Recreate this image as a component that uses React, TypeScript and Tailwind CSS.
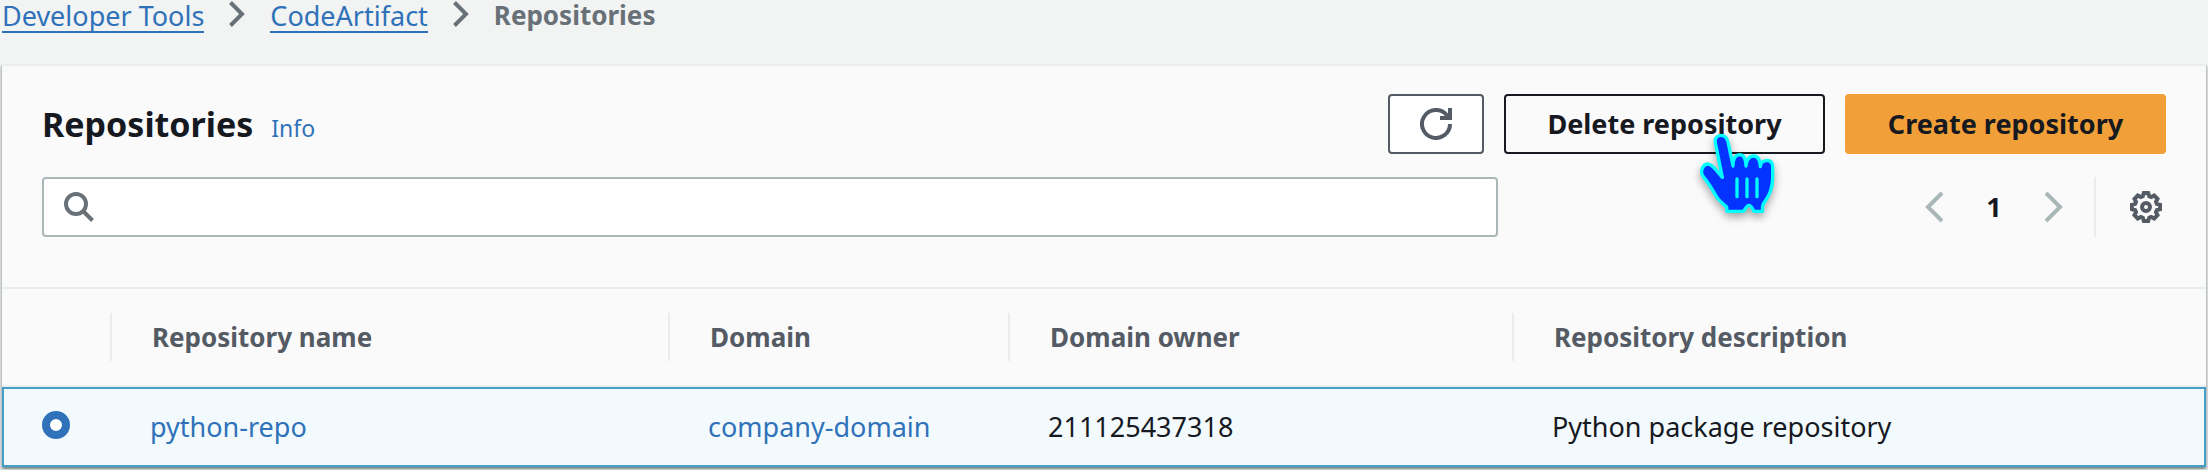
import { PropsWithChildren } from "react";
import clsx from "clsx";

const columns = ["Repository name", "Domain", "Domain owner", "Repository description"];

const repositories = [
    {
        name: "python-repo",
        domain: "company-domain",
        owner: "211125437318",
        description: "Python package repository",
    },
];

export default function App() {
    return (
        <div className="min-h-screen bg-[#f2f3f3] font-['Noto_Sans',sans-serif] text-[27px] leading-[40px] text-[#16191f]">
            <Breadcrumbs />
            <main className="mx-0.5 border-t-2 border-[#eaeded] bg-[#fafafa] shadow-[0_2px_2px_0_rgba(0,28,36,0.3),2px_2px_2px_0_rgba(0,28,36,0.15),-2px_2px_2px_0_rgba(0,28,36,0.15)]">
                <div className="px-10 pt-7 pb-[50px]">
                    <Header />
                    <Toolbar />
                </div>
                <RepositoriesTable />
            </main>
        </div>
    );
}

function Breadcrumbs() {
    return (
        <nav aria-label="Breadcrumbs" className="flex h-16 items-start gap-[25px] px-0.5 leading-[31px]">
            <BreadcrumbLink>Developer Tools</BreadcrumbLink>
            <BreadcrumbChevron />
            <BreadcrumbLink>CodeArtifact</BreadcrumbLink>
            <BreadcrumbChevron />
            <span className="text-[26px] font-bold text-[#687078]">Repositories</span>
        </nav>
    );
}

const BreadcrumbLink = ({ children }: PropsWithChildren) => (
    <a href="#" className="border-b-2 border-[#2f72b9] text-[#2f72b9]">
        {children}
    </a>
);

const BreadcrumbChevron = () => (
    <svg className="h-7 w-4" viewBox="0 0 16 28" fill="none" stroke="#687078" strokeWidth="4">
        <path d="M1.5 2.5 13 14 1.5 25.5" />
    </svg>
);

function Header() {
    return (
        <div className="flex items-center justify-between">
            <div className="flex items-baseline gap-[18px] pt-1">
                <h1 className="text-[34px] font-bold">Repositories</h1>
                <a href="#" className="text-[23px] text-[#2f72b9]">
                    Info
                </a>
            </div>
            <div className="flex gap-5">
                <Button className="w-24 border-[#545b64] bg-white" label="Refresh">
                    <RefreshIcon />
                </Button>
                <div className="relative">
                    <Button className="w-[321px] border-[#16191f] bg-[#fafafa]">Delete repository</Button>
                    <HandPointer />
                </div>
                <Button className="w-[321px] border-[#f19f39] bg-[#f19f39]">Create repository</Button>
            </div>
        </div>
    );
}

type ButtonProps = {
    className?: string;
    label?: string;
};
const Button = ({ className, label, children }: PropsWithChildren<ButtonProps>) => {
    return (
        <button
            aria-label={label}
            className={clsx(
                "flex h-[60px] items-center justify-center rounded border-2 font-bold whitespace-nowrap",
                className,
            )}
        >
            {children}
        </button>
    );
};

function Toolbar() {
    return (
        <div className="mt-[23px] grid grid-cols-[24fr_11fr]">
            <label className="flex h-[60px] items-center rounded border-2 border-[#aab7b8] bg-white px-5">
                <SearchIcon />
                <input type="search" aria-label="Find repositories" className="ml-4 w-full outline-none" />
            </label>
            <div className="flex items-center justify-end">
                <button aria-label="Previous page">
                    <PageChevron d="M18 2 4 16 18 30" />
                </button>
                <button aria-current="page" className="w-[100px] font-bold">
                    1
                </button>
                <button aria-label="Next page">
                    <PageChevron d="M2 2 16 16 2 30" />
                </button>
                <div className="ml-[30px] flex h-[60px] items-center border-l-2 border-[#eaeded] pr-1 pl-[34px]">
                    <button aria-label="Preferences">
                        <GearIcon />
                    </button>
                </div>
            </div>
        </div>
    );
}

function RepositoriesTable() {
    return (
        <table className="w-full table-fixed border-separate border-spacing-0 border-t-2 border-[#eaeded] text-left">
            <colgroup>
                <col className="w-[110px]" />
                <col className="w-[558px]" />
                <col className="w-[340px]" />
                <col className="w-[504px]" />
                <col />
            </colgroup>
            <thead className="text-[26px]">
                <tr>
                    <th className="border-b-2 border-[#eaeded] py-6">
                        <div className="h-12 border-r-2 border-[#eaeded]" />
                    </th>
                    {columns.map(column => (
                        <th key={column} className="group border-b-2 border-[#eaeded] py-6">
                            <div className="h-12 border-r-2 border-[#eaeded] pl-10 leading-[48px] font-bold text-[#545b64] group-last:border-r-0">
                                {column}
                            </div>
                        </th>
                    ))}
                </tr>
            </thead>
            <tbody>
                {repositories.map(repo => (
                    <tr
                        key={repo.name}
                        className="bg-[#f2fafd] *:h-20 *:border-y-2 *:border-[#469fc6] *:pl-[38px] *:first:border-l-2 *:first:pb-1 *:last:border-r-2"
                    >
                        <td>
                            <input
                                type="radio"
                                name="repository"
                                aria-label={repo.name}
                                defaultChecked
                                className="block size-7 appearance-none rounded-full border-[8px] border-[#2f72b9] bg-white"
                            />
                        </td>
                        <td>
                            <a href="#" className="text-[#2f72b9]">
                                {repo.name}
                            </a>
                        </td>
                        <td>
                            <a href="#" className="text-[#2f72b9]">
                                {repo.domain}
                            </a>
                        </td>
                        <td>{repo.owner}</td>
                        <td>{repo.description}</td>
                    </tr>
                ))}
            </tbody>
        </table>
    );
}

const RefreshIcon = () => (
    <svg className="size-8" viewBox="0 0 32 32" fill="none" stroke="#545b64" strokeWidth="4">
        <path d="M30 16A14 14 0 1 1 26.5 6.7L29 10" />
        <path d="M30 0V10H20" />
    </svg>
);

const SearchIcon = () => (
    <svg className="size-8 shrink-0" viewBox="0 0 32 32" fill="none" stroke="#687078" strokeWidth="4">
        <circle cx="12" cy="13" r="10" />
        <path d="M19 20 28.5 29.5" />
    </svg>
);

const PageChevron = ({ d }: { d: string }) => (
    <svg className="h-8 w-5" viewBox="0 0 20 32" fill="none" stroke="#aab7b8" strokeWidth="4">
        <path d={d} />
    </svg>
);

const GearIcon = () => (
    <svg className="block size-8" viewBox="0 0 32 32" fill="none" stroke="#545b64">
        <circle cx="16" cy="16" r="4" strokeWidth="4" />
        <path
            strokeWidth="4"
            d="M13.8 2h4.4l1 3.2 2 .8 3-1.5 3.3 3.3-1.5 3 .8 2 3.2 1v4.4l-3.2 1-.8 2 1.5 3-3.3 3.3-3-1.5-2 .8-1 3.2h-4.4l-1-3.2-2-.8-3 1.5-3.3-3.3 1.5-3-.8-2-3.2-1v-4.4l3.2-1 .8-2-1.5-3 3.3-3.3 3 1.5 2-.8z"
        />
    </svg>
);

// Oversized pointer that hovers over the delete button
const HandPointer = () => (
    <svg
        className="pointer-events-none absolute top-10 left-[196px] h-20 w-[75px] overflow-visible drop-shadow-[0_4px_4px_rgba(0,0,0,0.35)]"
        viewBox="90 66 225 240"
        stroke="#00fdff"
        strokeWidth="10"
        strokeLinecap="round"
        strokeLinejoin="round"
    >
        <path
            fill="#0433ff"
            d="M136 92C134 78 142 70 152 70C163 70 171 77 174 90L189 162Q189 130 208 128Q227 128 228 162Q231 132 250 132Q270 132 271 164Q272 146 292 145Q308 147 308 165V200C307 228 300 247 287 265C276 280 277 284 278 298H252C248 292 244 280 237 280C229 280 227 292 220 298H171L170 285C160 276 149 267 142 258C130 240 124 225 112 210L98 191C90 178 98 157 112 156C123 156 130 164 138 174L157 196Z"
        />
        <path d="M201 201V254M231 201V254M261 201V254" />
    </svg>
);
